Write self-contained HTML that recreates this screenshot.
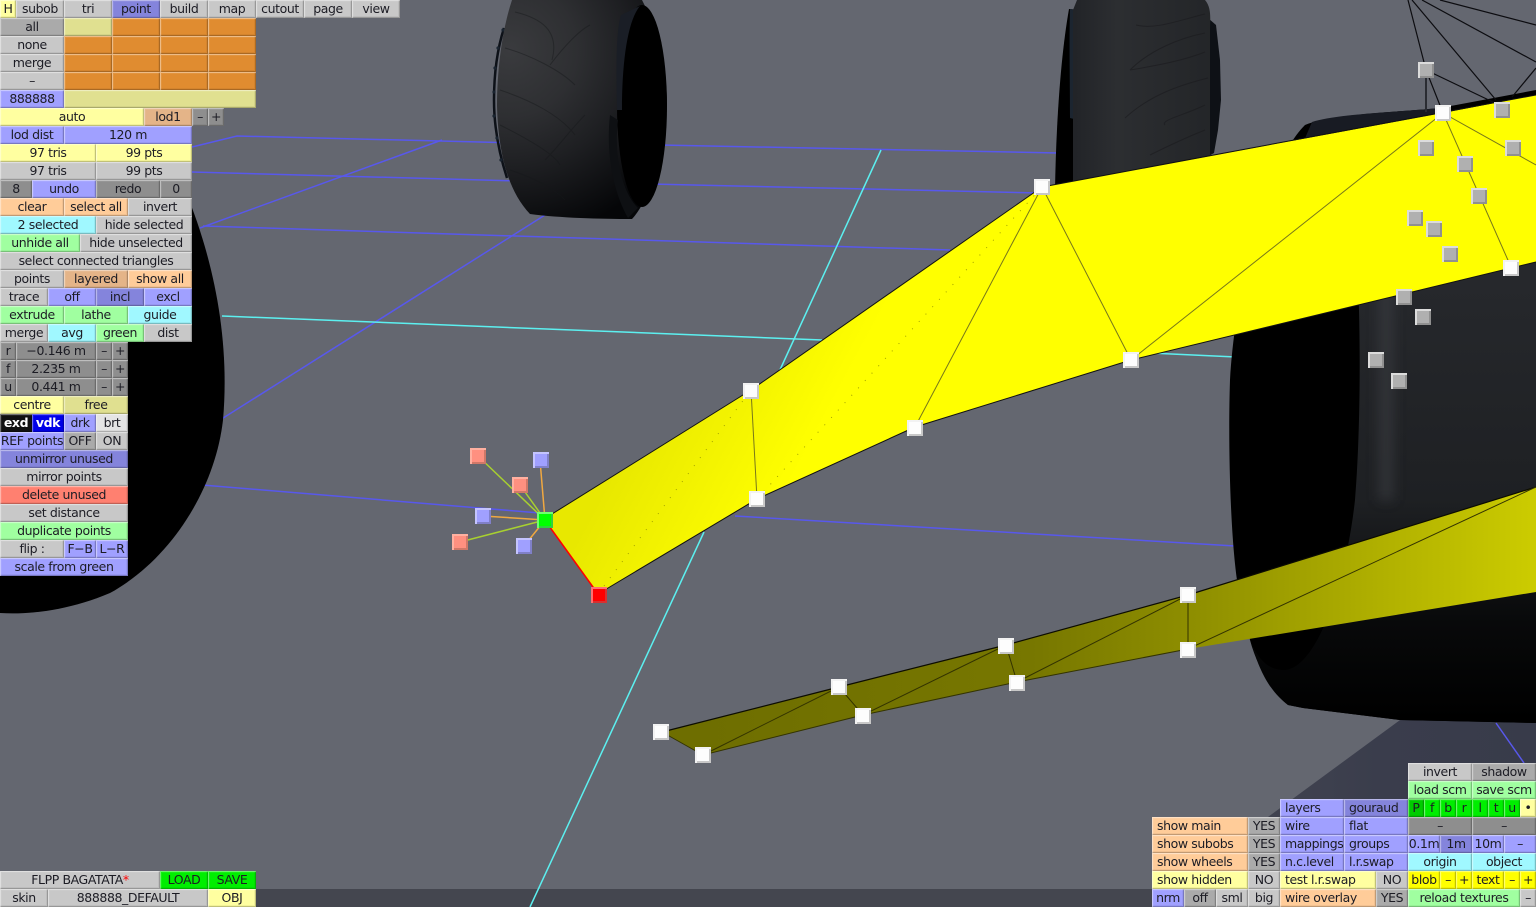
<!DOCTYPE html>
<html><head><meta charset="utf-8"><title>Editor</title>
<style>
html,body{margin:0;padding:0;background:#646770;width:1536px;height:907px;overflow:hidden}
#s{position:absolute;left:0;top:0}
b{position:absolute;height:18px;text-align:center;font:normal 12.5px/18px "DejaVu Sans",sans-serif;letter-spacing:-.4px;color:#1c1c24;white-space:nowrap;overflow:hidden;box-sizing:border-box;box-shadow:inset 1px 1px 0 rgba(255,255,255,.38),inset -1px -1px 0 rgba(0,0,0,.2),inset 2px 2px 0 rgba(255,255,255,.07),inset -2px -2px 0 rgba(0,0,0,.05)}
.l{text-align:left;padding-left:5px}
.g{background:#c8c8c8}.d{background:#aaa}.k{background:#8e8e8e}
.u{background:#a0a0ff}.v{background:#8484dc}.y{background:#ffffa0}.q{background:#e0e090}
.o{background:#e08c30}.p{background:#ffcc99}.t{background:#e4b488}.c{background:#a0f8ff}
.n{background:#a0ffa0}.r{background:#ff8070}.e{background:#00ee00}.w{background:#ffff00}
.h{position:absolute;width:16px;height:16px;box-sizing:border-box}
.hw{background:#fdfdfd;box-shadow:inset 2px 2px 0 #f2f2f2,inset -2px -2px 0 #c8c8c8}
.hg{background:#b0b0b0;box-shadow:inset 2px 2px 0 #dcdcdc,inset -2px -2px 0 #909090}
.hr{background:#ff0000;box-shadow:inset 2px 2px 0 #ff7070,inset -2px -2px 0 #d83030}
.hn{background:#00ff00;box-shadow:inset 2px 2px 0 #70ff70,inset -2px -2px 0 #30d040}
.hp{background:#ff9080;box-shadow:inset 2px 2px 0 #ffb0a0,inset -2px -2px 0 #d07868}
.hb{background:#a0a0ff;box-shadow:inset 2px 2px 0 #c4c4ff,inset -2px -2px 0 #8080c8}
</style></head><body>
<svg id="s" width="1536" height="907" viewBox="0 0 1536 907">
<defs>
<linearGradient id="fl" x1="1140" y1="0" x2="1536" y2="0" gradientUnits="userSpaceOnUse"><stop offset="0" stop-color="#484a54"/><stop offset=".6" stop-color="#3a3d4c"/><stop offset="1" stop-color="#383b4a"/></linearGradient>
<radialGradient id="t1" cx="510" cy="50" r="190" gradientUnits="userSpaceOnUse"><stop offset="0" stop-color="#3a3b3e"/><stop offset=".35" stop-color="#2e2f32"/><stop offset=".62" stop-color="#1e1f22"/><stop offset="1" stop-color="#050608"/></radialGradient>
<linearGradient id="t2" x1="1075" y1="0" x2="1215" y2="0" gradientUnits="userSpaceOnUse"><stop offset="0" stop-color="#222428"/><stop offset=".3" stop-color="#2c2e31"/><stop offset="1" stop-color="#232528"/></linearGradient>
<linearGradient id="t3" x1="0" y1="280" x2="0" y2="720" gradientUnits="userSpaceOnUse"><stop offset="0" stop-color="#26282c"/><stop offset=".5" stop-color="#1e2023"/><stop offset=".78" stop-color="#08090a"/><stop offset="1" stop-color="#000"/></linearGradient>
<filter id="bl" x="-100%" y="-20%" width="300%" height="140%"><feGaussianBlur stdDeviation="6"/></filter>
<linearGradient id="yl" x1="640" y1="420" x2="900" y2="560" gradientUnits="userSpaceOnUse"><stop offset="0" stop-color="#e8e800"/><stop offset=".55" stop-color="#ffff00"/></linearGradient>
<linearGradient id="lo" x1="700" y1="0" x2="1530" y2="0" gradientUnits="userSpaceOnUse"><stop offset="0" stop-color="#6e6e00"/><stop offset=".4" stop-color="#777700"/><stop offset=".6" stop-color="#8f8f00"/><stop offset="1" stop-color="#cbcb00"/></linearGradient>
</defs>
<rect width="1536" height="907" fill="#646770"/>
<path d="M1400,720 L1170,889 L256,889 L256,907 L1536,907 L1536,720Z" fill="url(#fl)"/>
<path d="M256,889H1170V907H256Z" fill="#44464f"/>
<g fill="none" stroke="#5858ec" stroke-width="1.5">
<path d="M192,147 L237,136 L520,143"/><path d="M660,145 L1058,153"/>
<path d="M192,172 L520,181"/><path d="M650,184 L1040,193"/>
<path d="M200,228 L442,140"/><path d="M203,226 L950,250"/>
<path d="M220,420 L545,215"/><path d="M190,484 L552,514"/>
<path d="M735,516 L1235,546"/><path d="M1496,723 L1524,763"/>
</g>
<g fill="none" stroke="#5cf0f0" stroke-width="1.5">
<path d="M881,150 L779,372"/><path d="M704,532 L530,907"/>
<path d="M222,316 L822,340"/><path d="M1150,353 L1236,357"/>
</g>
<!-- left wheel -->
<path d="M185,190 C214,260 230,340 223,420 C215,490 170,560 110,593 C70,610 30,615 0,613 L0,190Z" fill="#000"/>
<!-- top centre wheel -->
<path d="M504,28 C497,50 494,75 494,100 C494,125 498,150 507,178" fill="none" stroke="#0d1118" stroke-width="2.5"/>
<g fill="#1a2430"><circle cx="503" cy="30" r="1.6"/><circle cx="498" cy="48" r="1.6"/><circle cx="495" cy="68" r="1.6"/><circle cx="494" cy="92" r="1.6"/><circle cx="494" cy="116" r="1.6"/><circle cx="497" cy="138" r="1.6"/><circle cx="501" cy="160" r="1.6"/></g>
<path d="M512,0 C502,30 497,70 497,105 C498,150 507,190 530,214 C560,218 600,219 632,219 C650,200 665,150 667,105 C667,65 655,25 642,0Z" fill="url(#t1)"/>
<g fill="none" stroke="#17181b" stroke-width="1" opacity=".45">
<path d="M515,12 C540,18 560,30 552,60 M505,48 C530,55 560,70 575,85 M500,90 C530,100 560,115 575,135 M500,125 C530,140 555,155 560,165 M510,170 C540,180 555,190 565,200 M550,65 C565,45 580,30 590,25 M545,160 C560,145 570,130 585,115"/>
</g>
<ellipse cx="642" cy="106" rx="25" ry="101" fill="#000"/>
<path d="M621,15 L640,6 C628,20 622,60 622,110 L617,110 C616,70 616,30 621,15Z" fill="#1a1e26"/>
<path d="M618,120 C614,150 620,190 638,208 L628,218 C612,190 606,150 610,115Z" fill="#0e1013"/>
<!-- right top wheel -->
<path d="M1069,9 C1060,60 1056,130 1055,190 L1090,190 L1080,10Z" fill="#000"/>
<path d="M1070,9 L1078,10 L1078,120 L1070,118 C1070,80 1069,40 1070,9Z" fill="#1c2530"/>
<path d="M1208,18 L1216,25 L1220,60 L1221,100 L1218,130 L1214,153 L1207,157Z" fill="#0e1116"/>
<path d="M1077,0 L1205,0 C1212,8 1210,20 1210,30 L1210,160 L1073,190 L1073,10Z" fill="url(#t2)"/>
<g fill="none" stroke="#1a1b1e" stroke-width="1" opacity=".6">
<path d="M1205,14 C1180,20 1155,30 1136,25 M1205,33 C1180,38 1150,50 1130,70 M1205,52 C1185,60 1160,65 1130,70 M1208,78 C1180,85 1150,95 1125,118 M1205,105 C1185,115 1160,120 1165,125 M1205,130 C1180,140 1160,150 1150,155"/>
</g>
<!-- big right wheel -->
<path d="M1305,125 C1330,114 1400,112 1440,108 L1536,90 L1536,723 L1400,720 L1303,708 L1288,705 C1275,695 1258,670 1250,640 L1237,580 C1230,530 1228,440 1230,380 C1235,290 1265,165 1305,125Z" fill="#000"/>
<path d="M1312,122 C1335,114 1400,112 1440,108 L1440,130 L1300,150Z" fill="#181b23"/>
<path d="M1358,280 L1536,250 L1536,723 L1400,720 L1303,708 L1288,705 C1275,695 1262,680 1252,645 C1262,665 1272,670 1285,670 C1315,668 1345,590 1355,500 C1360,440 1361,350 1358,280Z" fill="url(#t3)"/>
<rect x="1379" y="290" width="14" height="210" fill="#3e4044" opacity=".6" filter="url(#bl)"/>
<!-- lines above -->
<g fill="none" stroke="#0c0c10" stroke-width="1.2">
<path d="M1408,0 L1426,70 L1443,113"/><path d="M1412,0 L1496,100"/><path d="M1422,0 L1536,62"/><path d="M1440,0 L1536,25"/><path d="M1426,70 L1495,103"/><path d="M1536,68 L1512,97"/>
</g>
<path d="M1426,78 V112" stroke="#2a2c32" stroke-width="2"/>
<!-- main band -->
<path d="M544,519 L751,390 L1042,187 L1443,113 L1536,95 L1536,262 L1131,360 L915,427 L757,499 L598,594Z" fill="url(#yl)"/>
<path d="M544,519 L751,390 L1042,187" fill="none" stroke="#111" stroke-width="1"/>
<path d="M1042,187 L1536,95" fill="none" stroke="#111" stroke-width="1"/>
<path d="M1536,262 L1131,360 L915,427 L757,499 L598,594" fill="none" stroke="#111" stroke-width="1"/>
<path d="M544,519 L598,594" fill="none" stroke="#ff0000" stroke-width="1.5"/>
<g fill="none" stroke="#77771a" stroke-width="1">
<path d="M1042,187 L915,427"/><path d="M1042,187 L1131,360"/><path d="M1131,360 L1443,113"/><path d="M751,390 L757,499"/>
<path d="M1443,113 L1511,267"/><path d="M1443,113 L1536,165"/>
</g>
<path d="M757,499 L1042,187 M598,594 L751,390" fill="none" stroke="#a0a000" stroke-width="1" stroke-dasharray="1 9"/>
<!-- handle links -->
<g fill="none" stroke-width="1.5">
<path d="M478,456 L545,520 M520,485 L545,520 M460,542 L545,520" stroke="#a8d030"/>
<path d="M540,460 L545,520 M483,516 L545,520 M524,546 L545,520" stroke="#f0a840"/>
</g>
<!-- lower band -->
<path d="M662,732 L839,687 L1006,645 L1188,595 L1536,487 L1536,592 L1188,649 L1017,682 L863,715 L703,755Z" fill="url(#lo)"/>
<path d="M662,732 L839,687 L1006,645 L1188,595 L1536,487" fill="none" stroke="#0c0c00" stroke-width="1.2"/>
<g fill="none" stroke="#333300" stroke-width="1">
<path d="M662,732 L703,755 L863,715 L1017,682 L1188,649"/>
<path d="M703,755 L839,687 L863,715 L1006,645 L1017,682 L1188,595 L1188,649 L1536,487"/>
</g>
</svg>
<i class="h hw" style="left:1034px;top:179px"></i><i class="h hw" style="left:743px;top:383px"></i><i class="h hw" style="left:907px;top:420px"></i><i class="h hw" style="left:749px;top:491px"></i><i class="h hw" style="left:1123px;top:352px"></i><i class="h hw" style="left:1435px;top:105px"></i><i class="h hw" style="left:1503px;top:260px"></i><i class="h hw" style="left:1180px;top:587px"></i><i class="h hw" style="left:1180px;top:642px"></i><i class="h hw" style="left:998px;top:638px"></i><i class="h hw" style="left:1009px;top:675px"></i><i class="h hw" style="left:831px;top:679px"></i><i class="h hw" style="left:855px;top:708px"></i><i class="h hw" style="left:653px;top:724px"></i><i class="h hw" style="left:695px;top:747px"></i>
<i class="h hg" style="left:1418px;top:62px"></i><i class="h hg" style="left:1494px;top:102px"></i><i class="h hg" style="left:1418px;top:140px"></i><i class="h hg" style="left:1505px;top:140px"></i><i class="h hg" style="left:1457px;top:156px"></i><i class="h hg" style="left:1471px;top:188px"></i><i class="h hg" style="left:1407px;top:210px"></i><i class="h hg" style="left:1426px;top:221px"></i><i class="h hg" style="left:1442px;top:246px"></i><i class="h hg" style="left:1396px;top:289px"></i><i class="h hg" style="left:1415px;top:309px"></i><i class="h hg" style="left:1368px;top:352px"></i><i class="h hg" style="left:1391px;top:373px"></i>
<i class="h hn" style="left:537px;top:512px"></i><i class="h hr" style="left:591px;top:587px"></i>
<i class="h hp" style="left:470px;top:448px"></i><i class="h hp" style="left:512px;top:477px"></i><i class="h hp" style="left:452px;top:534px"></i>
<i class="h hb" style="left:533px;top:452px"></i><i class="h hb" style="left:475px;top:508px"></i><i class="h hb" style="left:516px;top:538px"></i>

<b class="y" style="left:0;top:0;width:16px">H</b><b class="g" style="left:16px;top:0;width:48px">subob</b><b class="g" style="left:64px;top:0;width:48px">tri</b><b class="v" style="left:112px;top:0;width:48px">point</b><b class="g" style="left:160px;top:0;width:48px">build</b><b class="g" style="left:208px;top:0;width:48px">map</b><b class="g" style="left:256px;top:0;width:48px">cutout</b><b class="g" style="left:304px;top:0;width:48px">page</b><b class="g" style="left:352px;top:0;width:48px">view</b>
<b class="d" style="left:0;top:18px;width:64px">all</b><b class="q" style="left:64px;top:18px;width:48px"></b><b class="o" style="left:112px;top:18px;width:48px"></b><b class="o" style="left:160px;top:18px;width:48px"></b><b class="o" style="left:208px;top:18px;width:48px"></b>
<b class="g" style="left:0;top:36px;width:64px">none</b><b class="o" style="left:64px;top:36px;width:48px"></b><b class="o" style="left:112px;top:36px;width:48px"></b><b class="o" style="left:160px;top:36px;width:48px"></b><b class="o" style="left:208px;top:36px;width:48px"></b>
<b class="g" style="left:0;top:54px;width:64px">merge</b><b class="o" style="left:64px;top:54px;width:48px"></b><b class="o" style="left:112px;top:54px;width:48px"></b><b class="o" style="left:160px;top:54px;width:48px"></b><b class="o" style="left:208px;top:54px;width:48px"></b>
<b class="g" style="left:0;top:72px;width:64px">–</b><b class="o" style="left:64px;top:72px;width:48px"></b><b class="o" style="left:112px;top:72px;width:48px"></b><b class="o" style="left:160px;top:72px;width:48px"></b><b class="o" style="left:208px;top:72px;width:48px"></b>
<b class="u" style="left:0;top:90px;width:64px">888888</b><b class="q" style="left:64px;top:90px;width:192px"></b>
<b class="y" style="left:0;top:108px;width:144px">auto</b><b class="t" style="left:144px;top:108px;width:48px">lod1</b><b class="k" style="left:192px;top:108px;width:16px">–</b><b class="k" style="left:208px;top:108px;width:16px">+</b>
<b class="u" style="left:0;top:126px;width:64px">lod dist</b><b class="u" style="left:64px;top:126px;width:128px">120 m</b>
<b class="y" style="left:0;top:144px;width:96px">97 tris</b><b class="y" style="left:96px;top:144px;width:96px">99 pts</b>
<b class="g" style="left:0;top:162px;width:96px">97 tris</b><b class="g" style="left:96px;top:162px;width:96px">99 pts</b>
<b class="k" style="left:0;top:180px;width:32px">8</b><b class="u" style="left:32px;top:180px;width:64px">undo</b><b class="k" style="left:96px;top:180px;width:64px">redo</b><b class="k" style="left:160px;top:180px;width:32px">0</b>
<b class="p" style="left:0;top:198px;width:64px">clear</b><b class="p" style="left:64px;top:198px;width:64px">select all</b><b class="g" style="left:128px;top:198px;width:64px">invert</b>
<b class="c" style="left:0;top:216px;width:96px">2 selected</b><b class="g" style="left:96px;top:216px;width:96px">hide selected</b>
<b class="n" style="left:0;top:234px;width:80px">unhide all</b><b class="g" style="left:80px;top:234px;width:112px">hide unselected</b>
<b class="g" style="left:0;top:252px;width:192px">select connected triangles</b>
<b class="g" style="left:0;top:270px;width:64px">points</b><b class="t" style="left:64px;top:270px;width:64px">layered</b><b class="p" style="left:128px;top:270px;width:64px">show all</b>
<b class="g" style="left:0;top:288px;width:48px">trace</b><b class="u" style="left:48px;top:288px;width:48px">off</b><b class="v" style="left:96px;top:288px;width:48px">incl</b><b class="u" style="left:144px;top:288px;width:48px">excl</b>
<b class="n" style="left:0;top:306px;width:64px">extrude</b><b class="n" style="left:64px;top:306px;width:64px">lathe</b><b class="c" style="left:128px;top:306px;width:64px">guide</b>
<b class="g" style="left:0;top:324px;width:48px">merge</b><b class="c" style="left:48px;top:324px;width:48px">avg</b><b class="n" style="left:96px;top:324px;width:48px">green</b><b class="g" style="left:144px;top:324px;width:48px">dist</b>
<b class="k" style="left:0;top:342px;width:16px">r</b><b class="k" style="left:16px;top:342px;width:80px">−0.146 m</b><b class="k" style="left:96px;top:342px;width:16px">–</b><b class="k" style="left:112px;top:342px;width:16px">+</b>
<b class="k" style="left:0;top:360px;width:16px">f</b><b class="k" style="left:16px;top:360px;width:80px">2.235 m</b><b class="k" style="left:96px;top:360px;width:16px">–</b><b class="k" style="left:112px;top:360px;width:16px">+</b>
<b class="k" style="left:0;top:378px;width:16px">u</b><b class="k" style="left:16px;top:378px;width:80px">0.441 m</b><b class="k" style="left:96px;top:378px;width:16px">–</b><b class="k" style="left:112px;top:378px;width:16px">+</b>
<b class="y" style="left:0;top:396px;width:64px">centre</b><b class="q" style="left:64px;top:396px;width:64px">free</b>
<b style="left:0;top:414px;width:32px;background:#111;color:#fff;font-weight:bold">exd</b><b style="left:32px;top:414px;width:32px;background:#0000e8;color:#fff;font-weight:bold">vdk</b><b class="u" style="left:64px;top:414px;width:32px">drk</b><b style="left:96px;top:414px;width:32px;background:#e4e4e4">brt</b>
<b class="u" style="left:0;top:432px;width:64px">REF points</b><b class="d" style="left:64px;top:432px;width:32px">OFF</b><b class="g" style="left:96px;top:432px;width:32px">ON</b>
<b class="v" style="left:0;top:450px;width:128px">unmirror unused</b>
<b class="g" style="left:0;top:468px;width:128px">mirror points</b>
<b class="r" style="left:0;top:486px;width:128px">delete unused</b>
<b class="g" style="left:0;top:504px;width:128px">set distance</b>
<b class="n" style="left:0;top:522px;width:128px">duplicate points</b>
<b class="g" style="left:0;top:540px;width:64px">flip :</b><b class="u" style="left:64px;top:540px;width:32px">F−B</b><b class="u" style="left:96px;top:540px;width:32px">L−R</b>
<b class="u" style="left:0;top:558px;width:128px">scale from green</b>
<b class="g" style="left:0;top:871px;width:160px">FLPP BAGATATA<span style="color:#f00">*</span></b><b class="e" style="left:160px;top:871px;width:48px">LOAD</b><b class="e" style="left:208px;top:871px;width:48px">SAVE</b>
<b class="g" style="left:0;top:889px;width:48px">skin</b><b class="g" style="left:48px;top:889px;width:160px">888888_DEFAULT</b><b class="y" style="left:208px;top:889px;width:48px">OBJ</b>

<b class="g" style="left:1408px;top:763px;width:64px">invert</b><b class="d" style="left:1472px;top:763px;width:64px">shadow</b>
<b class="n" style="left:1408px;top:781px;width:64px">load scm</b><b class="n" style="left:1472px;top:781px;width:64px">save scm</b>
<b class="u l" style="left:1280px;top:799px;width:64px">layers</b><b class="v l" style="left:1344px;top:799px;width:64px">gouraud</b><b class="e" style="left:1408px;top:799px;width:16px;background:#00cc00">P</b><b class="e" style="left:1424px;top:799px;width:16px">f</b><b class="e" style="left:1440px;top:799px;width:16px">b</b><b class="e" style="left:1456px;top:799px;width:16px">r</b><b class="e" style="left:1472px;top:799px;width:16px">l</b><b class="e" style="left:1488px;top:799px;width:16px">t</b><b class="e" style="left:1504px;top:799px;width:16px">u</b><b class="y" style="left:1520px;top:799px;width:16px">•</b>
<b class="p l" style="left:1152px;top:817px;width:96px">show main</b><b class="d" style="left:1248px;top:817px;width:32px">YES</b><b class="u l" style="left:1280px;top:817px;width:64px">wire</b><b class="u l" style="left:1344px;top:817px;width:64px">flat</b><b class="k" style="left:1408px;top:817px;width:64px">–</b><b class="k" style="left:1472px;top:817px;width:64px">–</b>
<b class="p l" style="left:1152px;top:835px;width:96px">show subobs</b><b class="d" style="left:1248px;top:835px;width:32px">YES</b><b class="u l" style="left:1280px;top:835px;width:64px">mappings</b><b class="u l" style="left:1344px;top:835px;width:64px">groups</b><b class="u" style="left:1408px;top:835px;width:32px">0.1m</b><b class="v" style="left:1440px;top:835px;width:32px">1m</b><b class="u" style="left:1472px;top:835px;width:32px">10m</b><b class="u" style="left:1504px;top:835px;width:32px">–</b>
<b class="p l" style="left:1152px;top:853px;width:96px">show wheels</b><b class="d" style="left:1248px;top:853px;width:32px">YES</b><b class="u l" style="left:1280px;top:853px;width:64px">n.c.level</b><b class="u l" style="left:1344px;top:853px;width:64px">l.r.swap</b><b class="c" style="left:1408px;top:853px;width:64px">origin</b><b class="c" style="left:1472px;top:853px;width:64px">object</b>
<b class="y l" style="left:1152px;top:871px;width:96px">show hidden</b><b class="g" style="left:1248px;top:871px;width:32px">NO</b><b class="y l" style="left:1280px;top:871px;width:96px">test l.r.swap</b><b class="g" style="left:1376px;top:871px;width:32px">NO</b><b class="w" style="left:1408px;top:871px;width:32px">blob</b><b class="w" style="left:1440px;top:871px;width:16px">–</b><b class="w" style="left:1456px;top:871px;width:16px">+</b><b class="w" style="left:1472px;top:871px;width:32px">text</b><b class="w" style="left:1504px;top:871px;width:16px">–</b><b class="w" style="left:1520px;top:871px;width:16px">+</b>
<b class="u" style="left:1152px;top:889px;width:32px">nrm</b><b class="d" style="left:1184px;top:889px;width:32px">off</b><b class="g" style="left:1216px;top:889px;width:32px">sml</b><b class="g" style="left:1248px;top:889px;width:32px">big</b><b class="p l" style="left:1280px;top:889px;width:96px">wire overlay</b><b class="d" style="left:1376px;top:889px;width:32px">YES</b><b class="n" style="left:1408px;top:889px;width:112px">reload textures</b><b class="g" style="left:1520px;top:889px;width:16px">–</b>
</body></html>
